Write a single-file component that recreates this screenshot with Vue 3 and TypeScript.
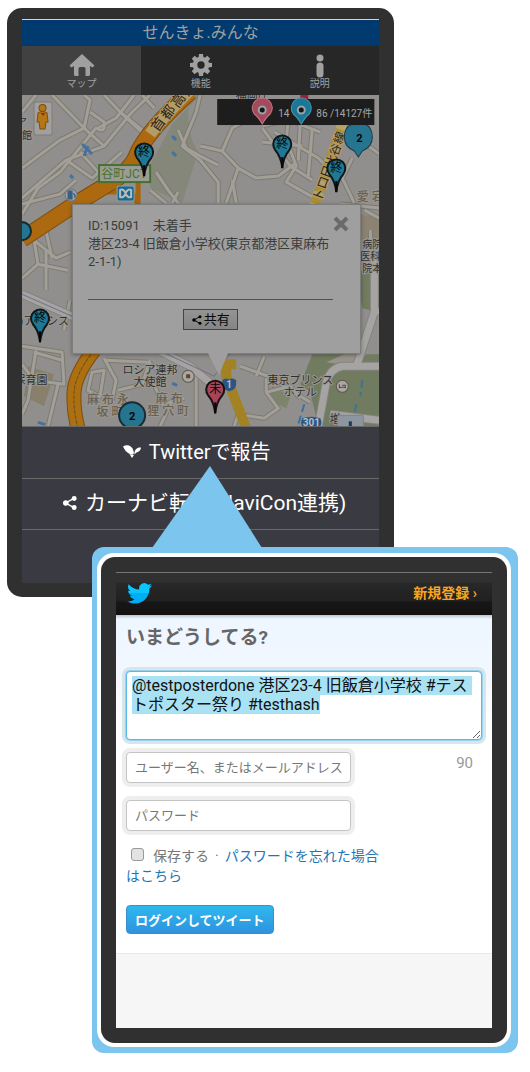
<script setup lang="ts">
import { onMounted, ref } from 'vue'

interface Label {
  text: string
  x: number
  y: number
  size: number
  rotate?: number
  tone: 'dark' | 'area' | 'road'
}
interface Pin {
  x: number
  y: number
  text: string
  kind: 'done' | 'todo'
}

const minorRoads: string[] = [
  'M22 112 L36 95', 'M52 95 L84 128 L104 146', 'M22 168 L60 140 L84 128 L90 100 L84 95',
  'M104 95 L120 112 L150 140', 'M98 128 L116 118 L134 95', 'M90 112 L104 122 Q106 134 96 128 L60 172',
  'M22 198 L66 160 L104 146 L132 112 L150 95', 'M60 172 L38 188 L22 214', 'M80 152 L98 172',
  'M66 160 L92 178 L122 152', 'M120 112 L142 130', 'M142 95 L154 108', 'M22 204 L60 194 L76 180',
  'M34 240 L56 258 L70 252', 'M22 278 L38 264 L34 240', 'M38 264 L68 270 M44 222 L52 258',
  'M46 250 L46 290', 'M22 346 L62 352 L64 384 L34 380', 'M36 350 L28 400 L22 414',
  'M34 352 L62 360', 'M58 384 L48 426', 'M64 330 L70 300', 'M22 364 L34 380',
  'M178 130 L186 148 L200 156 L218 165', 'M200 95 L196 112 L182 146 L200 160 L218 182 L218 203',
  'M200 146 L222 151 L232 128 L262 112', 'M222 151 L238 168 L256 178 L278 176 L294 164',
  'M262 128 L290 166 L312 180', 'M262 126 L288 120 L320 132', 'M274 132 L318 158 L326 166',
  'M288 120 L286 140 L296 166 L286 182 L318 200', 'M300 122 L298 160', 'M312 128 L308 176',
  'M262 142 L302 146', 'M238 168 L226 203', 'M232 180 L236 203', 'M344 128 L379 154',
  'M352 158 L342 178 L354 203', 'M340 204 L379 208', 'M150 190 L166 203', 'M156 172 L168 190 L178 203',
  'M178 192 L172 203', 'M364 210 L379 218', 'M370 230 L372 308', 'M92 372 L104 370 L100 396 L88 390 Z',
  'M104 358 L116 380 L112 400', 'M106 360 L148 362 L164 375', 'M150 360 L142 384 L118 390',
  'M154 384 L162 404 L184 398', 'M160 426 L172 400', 'M184 362 L196 376 L196 426',
  'M240 366 L268 376 L310 402', 'M256 376 L264 356', 'M266 378 L266 392 L278 408 L264 418 L238 414',
  'M234 426 L238 414', 'M266 392 L290 386 L300 398',
]
const mainRoads: string[] = [
  'M22 294 L72 316 L150 346 L190 366 L214 386',
  'M318 426 L326 382 Q330 368 342 366 L379 366',
  'M356 366 L374 312 L379 310', 'M374 312 L374 260', 'M330 414 L379 420',
]
const labels: Label[] = [
  { text: '首', x: 162, y: 127, size: 14, rotate: -54, tone: 'road' },
  { text: '都', x: 172, y: 115, size: 14, rotate: -54, tone: 'road' },
  { text: '高', x: 182, y: 103, size: 14, rotate: -54, tone: 'road' },
  { text: '速', x: 192, y: 91, size: 14, rotate: -54, tone: 'road' },
  { text: 'ト', x: 323, y: 196, size: 13, rotate: -70, tone: 'road' },
  { text: 'ロ', x: 327, y: 184, size: 13, rotate: -70, tone: 'road' },
  { text: '日', x: 331, y: 173, size: 13, rotate: -70, tone: 'road' },
  { text: '比', x: 335, y: 162, size: 12, rotate: -70, tone: 'road' },
  { text: '谷', x: 339, y: 151, size: 12, rotate: -70, tone: 'road' },
  { text: '線', x: 343, y: 139, size: 12, rotate: -70, tone: 'road' },
  { text: 'ア', x: 22, y: 126, size: 10, tone: 'dark' },
  { text: '館', x: 27, y: 139, size: 10, tone: 'dark' },
  { text: '愛 宕', x: 370, y: 201, size: 12, tone: 'area' },
  { text: '病院', x: 372, y: 248, size: 10, tone: 'dark' },
  { text: '医科大', x: 375, y: 260, size: 10, tone: 'dark' },
  { text: '院本', x: 372, y: 272, size: 10, tone: 'dark' },
  { text: ')ア', x: 27, y: 325, size: 11, tone: 'dark' },
  { text: 'シス', x: 58, y: 325, size: 11, tone: 'dark' },
  { text: '保育園', x: 31, y: 384, size: 11, tone: 'dark' },
  { text: 'ロシア連邦', x: 150, y: 374, size: 11, tone: 'dark' },
  { text: '大使館', x: 150, y: 386, size: 11, tone: 'dark' },
  { text: '麻 布 永', x: 108, y: 404, size: 12, tone: 'area' },
  { text: '坂 町', x: 110, y: 416, size: 12, tone: 'area' },
  { text: '麻 布', x: 169, y: 403, size: 12, tone: 'area' },
  { text: '狸 穴 町', x: 168, y: 415, size: 12, tone: 'area' },
  { text: '東京プリンス', x: 300, y: 384, size: 11, tone: 'dark' },
  { text: 'ホテル', x: 300, y: 396, size: 11, tone: 'dark' },
  { text: '増', x: 335, y: 423, size: 11, tone: 'dark' },
  { text: '福岡庁', x: 252, y: 99, size: 11, tone: 'dark' },
]
const pins: Pin[] = [
  { x: 144, y: 152, text: '終', kind: 'done' },
  { x: 282, y: 144, text: '終', kind: 'done' },
  { x: 336, y: 168, text: '終', kind: 'done' },
  { x: 40, y: 318, text: '終', kind: 'done' },
  { x: 215, y: 389, text: '未', kind: 'todo' },
]

const tweet = ref('@testposterdone 港区23-4 旧飯倉小学校 #テストポスター祭り #testhash')
const user = ref('')
const password = ref('')
const remember = ref(false)
const tweetBox = ref<HTMLTextAreaElement | null>(null)

onMounted(() => {
  tweetBox.value?.focus({ preventScroll: true })
  tweetBox.value?.select()
})
</script>

<template>
  <main class="stage">
    <section class="phone">
      <div class="screen">
        <h1 class="title">せんきょ.みんな</h1>
        <nav class="tabs">
          <button type="button" class="tab active">
            <svg width="26" height="22" viewBox="0 0 26 22"><path d="M13 0 L25.500 11.500 L23.500 13.500 L21 12 V20.500 Q21 22 19.500 22 H16.500 V14.500 Q16.500 13 15 13 H11 Q9.500 13 9.500 14.500 V22 H6.500 Q5 22 5 20.500 V12 L2.500 13.500 L0.500 11.500 Z" /></svg>
            <span>マップ</span>
          </button>
          <button type="button" class="tab">
            <svg width="24" height="22" viewBox="-12 -12 24 24">
              <g v-for="n in 8" :key="n" :transform="`rotate(${n * 45})`"><path d="M-2.800 -7 L-2.200 -12 H2.200 L2.800 -7 Z" /></g>
              <circle r="6.500" class="gear-ring" />
            </svg>
            <span>機能</span>
          </button>
          <button type="button" class="tab">
            <svg width="10" height="24" viewBox="0 0 10 24"><circle cx="5" cy="4" r="3.500" /><rect x="1.500" y="8.500" width="7" height="15" rx="3.500" /></svg>
            <span>説明</span>
          </button>
        </nav>

        <div class="map">
          <svg class="map-art" viewBox="22 95 357 331">
            <rect x="22" y="95" width="357" height="331" fill="#918f8d" />
            <path d="M150 165 L172 124 L200 95 H190 Q184 132 198 152 L182 203 L150 188 Z" fill="#85877b" />
            <path d="M28 366 L54 374 L44 406 L24 396 Z" fill="#89806c" />
            <path d="M312 354 H379 V426 H318 L310 392 L300 384 Z" fill="#707b60" />
            <path d="M356 270 L379 274 V312 L362 308 Z" fill="#707b60" />
            <path d="M272 386 L290 396 L286 408 L270 400 Z" fill="#7d846c" />
            <path d="M360 214 L379 218 V240 H360 Z" fill="#8c8272" />
            <path d="M326 362 L344 354 H366 L352 366 Z" fill="#97928a" />
            <g fill="none" stroke-linejoin="round">
              <path v-for="d in minorRoads" :key="'e' + d" :d="d" stroke="#7d7a70" stroke-width="5" />
              <path v-for="d in minorRoads" :key="'f' + d" :d="d" stroke="#a19f98" stroke-width="3" />
              <path v-for="d in mainRoads" :key="'e' + d" :d="d" stroke="#85837e" stroke-width="9" />
              <path v-for="d in mainRoads" :key="'f' + d" :d="d" stroke="#a5a4a2" stroke-width="7" />
              <path d="M22 294 L72 316 L150 346 L214 376 L232 350" stroke="#77728a" stroke-width="1" />
              <path d="M102 192 H132 L138 204" stroke="#a86510" stroke-width="5" />
              <path d="M138 170 V204" stroke="#a86510" stroke-width="5" />
              <path d="M22 239 L72 206 L108 184 Q132 170 138 152 Q150 128 190 92" stroke="#7c4d10" stroke-width="17" />
              <path d="M22 239 L72 206 L108 184 Q132 170 138 152 Q150 128 190 92" stroke="#ad6910" stroke-width="15" />
              <path d="M150 134 Q160 120 190 90" stroke="#b49c66" stroke-width="12" />
              <path d="M94 350 Q75 374 74 392 Q73 410 78 428" stroke="#7c4d10" stroke-width="15" />
              <path d="M94 350 Q75 374 74 392 Q73 410 78 428" stroke="#ad7010" stroke-width="13" />
              <path d="M94 350 Q75 374 74 392 Q73 410 78 428" stroke="#68501f" stroke-width="1" stroke-dasharray="4 1" />
              <path d="M342 124 L314 206" stroke="#a98f34" stroke-width="10" />
              <path d="M342 124 L314 206" stroke="#b4a36b" stroke-width="10" stroke-dasharray="6 6" />
              <path d="M236 364 L226 364 L226 376 L246 428" stroke="#a38224" stroke-width="10" />
              <path d="M362 380 L360 396 M356 404 L354 414 M304 404 L298 424" stroke="#3e719c" stroke-width="2" stroke-dasharray="8 4" />
              <path d="M82 144 L92 154 M88 146 L84 156 M172 136 L176 140 M172 152 L176 156 M70 175 L73 178 M172 383 L177 385 M38 422 L45 424" stroke="#45719e" stroke-width="3" />
            </g>

            <text
              v-for="(l, i) in labels" :key="i" :x="l.x" :y="l.y" :font-size="l.size" :class="['lbl', l.tone]"
              :transform="l.rotate ? `rotate(${l.rotate} ${l.x} ${l.y})` : undefined"
            >{{ l.text }}</text>

            <rect x="99" y="165" width="51" height="17" fill="#9b9d94" stroke="#47702f" stroke-width="2" />
            <text x="124" y="178" font-size="12" class="sign">谷町JCT</text>
            <rect x="117" y="186" width="17" height="15" rx="2" fill="#126b94" stroke="#9a9a9a" />
            <path d="M120 190 Q123 188 125.500 193 Q128 188 131 190 V197 Q128 198 125.500 194 Q123 198 120 197 Z" fill="none" stroke="#b5bdc0" stroke-width="2" />
            <circle cx="71" cy="195" r="6" fill="#a2a2a2" stroke="#6d7681" />
            <path d="M68 191 H72 V199 H68 Z M73 193 L75 195 V198" fill="#395e83" stroke="#395e83" stroke-width="1" />
            <rect x="34" y="102" width="18" height="33" rx="2" fill="#a2a09e" stroke="#7e7c7a" />
            <g fill="#b47616" stroke="#79500f" stroke-width="1">
              <path d="M38 113 Q42.500 110 47 113 L48 122 H46 L45 129 H40 L39 122 H37 Z" /><circle cx="42.500" cy="108" r="3.500" />
            </g>
            <path d="M41 113 H45 L43 116 Z" fill="#8d2419" />
            <path d="M300 95 H308 V99 H300 Z" fill="#9a2333" />

            <g stroke="#60584f" fill="#aaa8a4">
              <circle cx="188" cy="376" r="6" /><circle cx="342" cy="386" r="6" />
            </g>
            <rect x="186" y="374" width="4" height="4" fill="#5c4630" />
            <path d="M339 384 V388 M339 387 H345 M342 385 H345 V388" fill="none" stroke="#60442c" />
            <path d="M222 380 Q225 377 229 379 Q233 377 236 380 Q237 390 229 391 Q221 390 222 380 Z" fill="#2b5684" />
            <text x="229" y="388" font-size="10" class="shield">1</text>
            <path d="M302 418 Q311 415 320 418 Q323 424 318 428 H304 Q299 424 302 418 Z" fill="#2b5684" />
            <text x="311" y="426" font-size="10" class="shield">301</text>
            <rect x="337" y="415" width="26" height="16" rx="2" fill="#8d969e" stroke="#7b8389" />
            <path d="M350 421 V427" stroke="#17395e" stroke-width="3" />

            <circle cx="22" cy="231" r="9" fill="#257490" stroke="#142b35" stroke-width="2" />
            <g stroke="#22373f" stroke-width="1" fill="#257490">
              <path d="M358 157 L354 151 Q344 147 344 137 Q344 127 352 124 H364 Q372 127 372 137 Q372 147 362 151 Z" />
              <circle cx="132" cy="415" r="13" stroke="#182d35" stroke-width="2" />
            </g>
            <text x="359" y="142" font-size="11" class="count">2</text>
            <text x="132" y="420" font-size="11" class="count">2</text>

            <g v-for="(p, i) in pins" :key="'p' + i" :transform="`translate(${p.x} ${p.y})`">
              <path :class="p.kind" d="M0 24 Q-1 13 -7 6 A9 9 0 1 1 7 6 Q1 13 0 24 Z" />
              <path d="M0 13 V24" stroke="#080808" stroke-width="2" />
              <text x="0" y="4" font-size="12" class="pin-text">{{ p.text }}</text>
            </g>

            <rect x="217" y="99" width="157" height="26" fill="#1d1d1d" />
            <path d="M262 124 Q258 117 254 114 A10 10 0 1 1 270 114 Q266 117 262 124 Z" fill="#a44a5c" stroke="#bf7885" />
            <path d="M301 124 Q297 117 293 114 A10 10 0 1 1 309 114 Q305 117 301 124 Z" fill="#1a7797" stroke="#4a93ac" />
            <g fill="#151515" stroke="#98a4a7" stroke-width="2"><circle cx="262" cy="110" r="3.500" /><circle cx="301" cy="110" r="3.500" /></g>
            <text x="278" y="117" font-size="10" class="tally">14</text>
            <text x="316" y="117" font-size="10" class="tally">86 /14127件</text>
          </svg>

          <div class="popup">
            <button type="button" class="close" aria-label="閉じる">
              <svg width="16" height="16" viewBox="0 0 16 16"><path d="M2 2 L14 14 M14 2 L2 14" /></svg>
            </button>
            <p>ID:15091　未着手<br>港区23-4 旧飯倉小学校(東京都港区東麻布2-1-1)</p>
            <hr>
            <button type="button" class="share">
              <svg width="10" height="10" viewBox="0 0 20 20"><path d="M16 3 L4 10 L16 17" fill="none" stroke="currentColor" stroke-width="2" /><circle cx="16" cy="3.500" r="3" /><circle cx="4" cy="10" r="3.500" /><circle cx="16" cy="16.500" r="3" /></svg>共有
            </button>
            <svg class="tail" width="20" height="22" viewBox="0 0 20 22"><path d="M0 0 H20 L11 22 Z" /></svg>
          </div>
        </div>

        <div class="sheet">
          <button type="button" class="action first">
            <svg width="18" height="14" viewBox="0 0 18 14">
              <path d="M0 1.500 C4 -1 10 0 11 8.500 L9.500 9.500 C5 9 2 6 0 1.500 Z" />
              <path d="M11.500 8 C11.500 5 14 2 18 2.500 C18 5 16 7 13.500 7.500 L11.500 9.500 Z" />
              <path d="M6.500 9 L11 10 L9 13 Z" />
            </svg>
            Twitterで報告
          </button>
          <button type="button" class="action second">
            <svg width="14" height="14" viewBox="0 0 20 20"><path d="M16 3 L4 10 L16 17" fill="none" stroke="currentColor" stroke-width="2" /><circle cx="16" cy="3.500" r="3.500" /><circle cx="4" cy="10" r="4" /><circle cx="16" cy="16.500" r="3.500" /></svg>
            カーナビ転送(NaviCon連携)
          </button>
          <div class="sheet-rest"></div>
        </div>
      </div>
    </section>

    <section class="callout">
      <svg class="pointer" width="110" height="82" viewBox="0 0 110 82"><path d="M58 0 L110 82 H0 Z" /></svg>
      <div class="gap">
        <div class="phone-two">
          <header class="bar">
            <svg width="25" height="21" viewBox="0 0 24 20">
              <defs><linearGradient id="bird" x2="0" y2="1"><stop offset="0.500" stop-color="#08c6ff" /><stop offset="0.500" stop-color="#00aef5" /></linearGradient></defs>
              <path fill="url(#bird)" d="M24 2.400c-.9.400-1.800.7-2.800.8 1-.6 1.800-1.600 2.100-2.700-.9.600-2 1-3.100 1.200A4.900 4.900 0 0 0 11.800 6.200C7.700 6 4.100 4 1.700 1a4.900 4.900 0 0 0 1.500 6.600c-.8 0-1.600-.3-2.200-.6 0 2.300 1.600 4.400 3.900 4.900-.7.200-1.500.2-2.200.1.600 2 2.400 3.400 4.600 3.400A9.900 9.900 0 0 1 0 17.500 14 14 0 0 0 7.500 19.700c9.100 0 14.300-7.700 14-14.600 1-.7 1.800-1.600 2.500-2.700z" />
            </svg>
            <a href="#signup">新規登録 ›</a>
          </header>
          <form class="form" @submit.prevent>
            <h2><label for="tweet">いまどうしてる?</label></h2>
            <textarea id="tweet" ref="tweetBox" v-model="tweet" spellcheck="false"></textarea>
            <div class="row">
              <input v-model="user" class="field" type="text" aria-label="ユーザー名、またはメールアドレス" placeholder="ユーザー名、またはメールアドレス">
              <output for="tweet">90</output>
            </div>
            <input v-model="password" class="field pass" type="password" aria-label="パスワード" placeholder="パスワード">
            <p class="keep">
              <input id="keep" v-model="remember" type="checkbox"><label for="keep">保存する</label><span class="dot">·</span><a href="#forgot">パスワードを忘れた場合はこちら</a>
            </p>
            <button type="submit" class="login">ログインしてツイート</button>
          </form>
          <footer class="foot"></footer>
        </div>
      </div>
    </section>
  </main>
</template>

<style>
body { background: #fff; }
</style>

<style scoped>
* { box-sizing: border-box; }
.stage {
  padding: 8px 12px 19px 7px;
  font-family: Roboto, "Noto Sans CJK JP", sans-serif;
}
button, input, textarea { font-family: inherit; margin: 0; }
h1, h2, p { margin: 0; font-weight: 400; }
svg { display: block; flex: none; }

.phone {
  width: calc(76% - 1px);
  padding: 11px 15px 14px;
  background: #303030;
  border-radius: 15px;
}
.screen { border-top: 1px solid #d4d4d4; }
.title {
  background: #003a6e;
  color: #a0a0a0;
  font-size: 16px;
  line-height: 26px;
  text-align: center;
}
.tabs { display: grid; grid-template-columns: repeat(3, 1fr); }
.tab {
  display: flex;
  flex-direction: column;
  align-items: center;
  justify-content: space-between;
  height: 49px;
  padding: 8px 0 5px;
  border: 0;
  background: #272727;
  color: #a0a0a0;
  font-size: 10px;
  line-height: 12px;
}
.tab.active { background: #414141; }
.tab svg { fill: #a0a0a0; }
.tab .gear-ring { fill: none; stroke: #a0a0a0; stroke-width: 5; }

.map { position: relative; }
.map-art { width: 100%; height: auto; }
.lbl { text-anchor: middle; paint-order: stroke; stroke: #999791; stroke-width: 2px; fill: #302e2c; }
.lbl.area { fill: #6b6150; font-weight: 500; }
.lbl.road { fill: #2c251a; stroke: #b49c66; }
.sign { text-anchor: middle; fill: #47702f; }
.shield { text-anchor: middle; fill: #b4bfc9; font-weight: 700; }
.count { text-anchor: middle; fill: #050505; font-weight: 700; }
.pin-text { text-anchor: middle; fill: #050505; }
.done { fill: #1e7896; stroke: #101719; stroke-width: 2px; }
.todo { fill: #a84458; stroke: #191012; stroke-width: 2px; }
.tally { fill: #a8a8a8; }

.popup {
  position: absolute;
  top: 33%;
  left: 14%;
  width: 81%;
  padding: 12px 27px 23px 15px;
  background: #9f9f9f;
  border: 1px solid #7d7d7d;
  box-shadow: 0 1px 4px rgba(0, 0, 0, 0.35);
  color: #3c3c3c;
  font-size: 13px;
  line-height: 18px;
}
.popup hr { margin: 28px 0 9px; border: 0; border-top: 1px solid #505050; }
.close { position: absolute; top: 11px; right: 11px; padding: 0; border: 0; background: none; }
.close svg { stroke: #6a6a6a; stroke-width: 4; }
.share {
  display: flex;
  align-items: center;
  justify-content: center;
  gap: 2px;
  width: 55px;
  height: 21px;
  margin: 0 auto;
  padding: 0;
  border: 1px solid #444;
  background: linear-gradient(#949494, #858585);
  color: #080808;
  font-size: 13px;
  line-height: 18px;
}
.tail { position: absolute; top: 100%; left: 135px; fill: #9f9f9f; }

.sheet { background: #3a3a42; }
.action {
  display: flex;
  align-items: center;
  justify-content: center;
  gap: 8px;
  width: 100%;
  height: 52px;
  padding: 0 0 2px;
  border: 0;
  border-top: 1px solid #696969;
  background: #3a3a42;
  color: #fff;
  font-size: 20px;
  line-height: 28px;
  white-space: nowrap;
}
.action.first { padding-right: 8px; }
.action.second { padding-left: 8px; border-bottom: 1px solid #696969; font-size: 21px; }
.action svg { fill: #fff; }
.sheet-rest { height: 53px; }

.callout {
  position: relative;
  margin: -50px 0 0 85px;
  padding: 6px 7px 6px 5px;
  background: #7bc5ee;
  border-radius: 12px;
}
.pointer { position: absolute; bottom: 100%; left: 60px; margin-bottom: -1px; fill: #7bc5ee; }
.gap { padding: 4px; background: #fff; border-radius: 17px; }
.phone-two { padding: 15px; background: #303030; border-radius: 14px; }
.bar {
  display: flex;
  align-items: center;
  justify-content: space-between;
  height: 43px;
  padding: 0 15px 2px 11px;
  border-top: 1px solid #77757c;
  background: linear-gradient(#303030 0, #303030 9px, #282828 10px, #202020 28px, #171717 29px, #141010);
}
.bar a { color: #f7a422; font-size: 14px; font-weight: 700; line-height: 18px; text-decoration: none; }
.form {
  padding: 11px 10px 19px;
  border-bottom: 1px solid #e4ebef;
  background: linear-gradient(#b7c6d4 0, #eef6ff 4px, #f0f7ff 42px, #f5f7fe 60px, #fff 110px);
}
.form h2 { color: #666; font-size: 19px; font-weight: 700; line-height: 24px; }
textarea {
  display: block;
  width: 100%;
  height: 69px;
  margin-top: 21px;
  padding: 4px 5px;
  border: 1px solid #58b9e5;
  border-radius: 4px;
  outline: 0;
  box-shadow: 0 0 0 1px #9bd3ee, 0 0 0 4px #d6e6ef;
  background: #fff;
  color: #111;
  font-size: 16px;
  line-height: 19px;
  overflow: hidden;
}
textarea::selection { background: #a9e2f3; color: #111; }
.row { display: flex; justify-content: space-between; margin-top: 12px; padding-right: 9px; }
.row output { color: #999; font-size: 15px; line-height: 22px; }
.field {
  display: block;
  width: 225px;
  height: 31px;
  padding: 0 0 0 8px;
  border: 1px solid #c4c4c4;
  border-radius: 4px;
  box-shadow: 0 0 0 4px #eee;
  background: #fff;
  color: #333;
  font-size: 13px;
}
.field::placeholder { color: #777; }
.pass { margin-top: 17px; }
.keep { max-width: 258px; margin-top: 15px; color: #777; font-size: 14px; line-height: 20px; }
.keep a { color: #1d76b5; text-decoration: none; }
.keep input {
  appearance: none;
  width: 13px;
  height: 13px;
  margin: 0 9px 0 5px;
  border: 1px solid #999;
  border-radius: 3px;
  background: #e4e2e2;
}
.dot { margin: 0 6px; }
.login {
  display: block;
  height: 29px;
  margin-top: 19px;
  padding: 0 8px;
  border: 1px solid #3a8fc8;
  border-radius: 4px;
  background: linear-gradient(#2fb8ef, #2e93dd);
  color: #fff;
  font-size: 13px;
  font-weight: 700;
}
.foot { height: 74px; background: #f6f6f6; }
</style>
